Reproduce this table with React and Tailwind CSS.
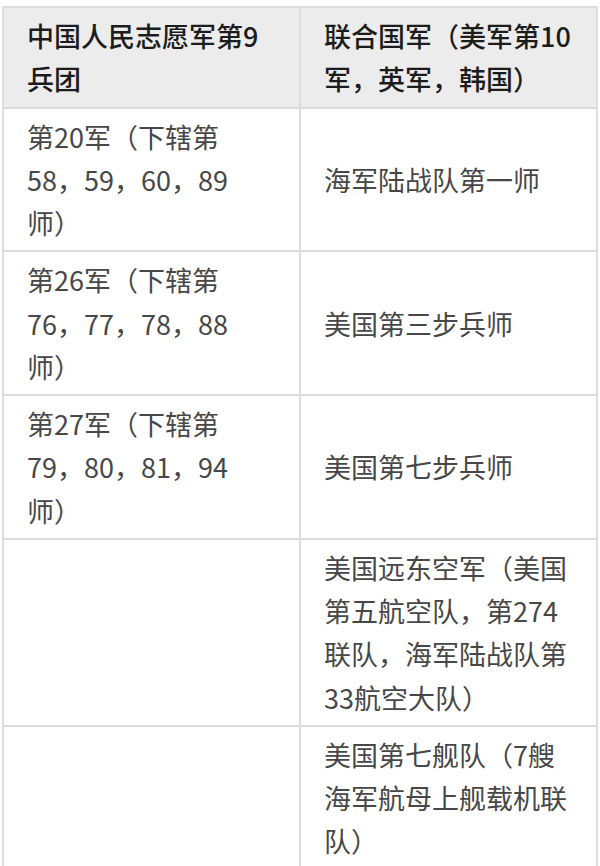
import React from 'react';

// rows of the battle order table; each cell is a list of lines
const header = [
  ['中国人民志愿军第9', '兵团'],
  ['联合国军（美军第10', '军，英军，韩国）'],
];

const rows = [
  [['第20军（下辖第', '58，59，60，89', '师）'], ['海军陆战队第一师']],
  [['第26军（下辖第', '76，77，78，88', '师）'], ['美国第三步兵师']],
  [['第27军（下辖第', '79，80，81，94', '师）'], ['美国第七步兵师']],
  [[], ['美国远东空军（美国', '第五航空队，第274', '联队，海军陆战队第', '33航空大队）']],
  [[], ['美国第七舰队（7艘', '海军航母上舰载机联', '队）']],
];

const Lines = ({ lines }) =>
  lines.map((line, i) => (
    <React.Fragment key={i}>
      {i > 0 && <br />}
      {line}
    </React.Fragment>
  ));

export default function App() {
  return (
    <div
      className="min-h-screen bg-white px-[2px] pt-[6px]"
      style={{ fontFamily: '"Noto Sans CJK SC", "Noto Sans", sans-serif' }}
    >
      <table className="w-full table-fixed border-collapse text-[27px] leading-[43.25px]">
        <thead>
          <tr className="bg-[#ececec]">
            {header.map((cell, i) => (
              <th
                key={i}
                className="whitespace-nowrap border-2 border-[#dcdcdc] px-[23px] py-[6px] text-left align-middle font-medium text-[#1c1c1c]"
              >
                <Lines lines={cell} />
              </th>
            ))}
          </tr>
        </thead>
        <tbody>
          {rows.map((row, r) => (
            <tr key={r}>
              {row.map((cell, c) => (
                <td
                  key={c}
                  className="whitespace-nowrap border-2 border-[#dcdcdc] px-[23px] py-[6px] align-middle text-[#474747]"
                >
                  <Lines lines={cell} />
                </td>
              ))}
            </tr>
          ))}
        </tbody>
      </table>
    </div>
  );
}
